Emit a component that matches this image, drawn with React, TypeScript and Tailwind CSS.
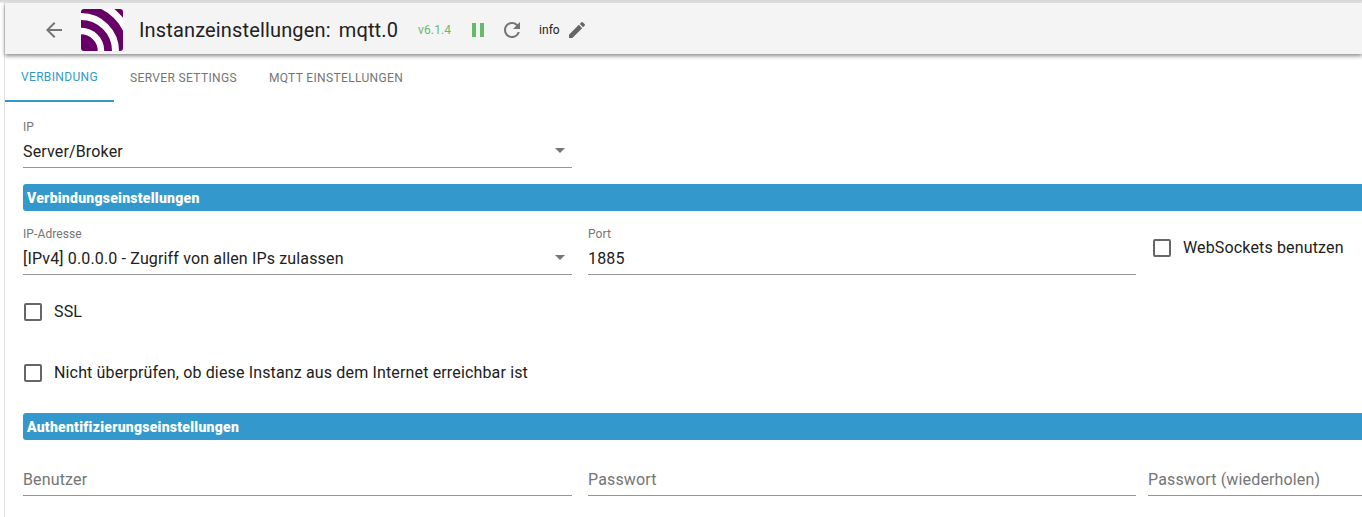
function MqttLogo() {
  return (
    <svg width="42" height="42" viewBox="0 0 42 42" className="rounded-[3px]">
      <rect width="42" height="42" fill="#660066" />
      <circle cx="0" cy="42" r="20" fill="none" stroke="#fff" strokeWidth="6.5" />
      <circle cx="0" cy="42" r="34.5" fill="none" stroke="#fff" strokeWidth="7" />
      <circle cx="0" cy="42" r="50" fill="none" stroke="#fff" strokeWidth="7" />
    </svg>
  );
}

function Caret() {
  return (
    <svg width="24" height="24" viewBox="0 0 24 24" className="absolute right-0 top-[2px] text-[#757575]">
      <path d="M7 10l5 5 5-5z" fill="currentColor" />
    </svg>
  );
}

function SelectField({ label, value, width }: { label: string; value: string; width: string }) {
  return (
    <div className={`${width} shrink-0`}>
      <div className="h-[16px] text-[12px] leading-[16px] tracking-[0.1px] text-[#757575]">{label}</div>
      <div className="relative mt-[1px] h-[32px] border-b border-[#949494] pt-[4px] text-[16px] leading-[24px] tracking-[0.15px] text-[#212121]">
        {value}
        <Caret />
      </div>
    </div>
  );
}

function Checkbox({ label }: { label: string }) {
  return (
    <div className="flex items-center">
      <span className="ml-[1px] h-[18px] w-[18px] shrink-0 rounded-[2px] border-2 border-[#666666]" />
      <span className="ml-[12px] text-[16px] leading-[24px] tracking-[0.15px] text-[#212121]">{label}</span>
    </div>
  );
}

function Section({ title }: { title: string }) {
  return (
    <div className="h-[27px] rounded-l-[3px] bg-[#3399cc] pl-[4px] text-[14px] font-black leading-[29px] tracking-[0.25px] text-white">
      {title}
    </div>
  );
}

function EmptyField({ label, width }: { label: string; width: string }) {
  return (
    <div className={`${width} h-[28px] shrink-0 border-b border-[#949494] text-[16px] leading-[24px] tracking-[0.15px] text-[#757575]`}>
      {label}
    </div>
  );
}

export default function App() {
  return (
    <div className="h-[517px] w-[1362px] overflow-hidden bg-white font-['Roboto',sans-serif]">
      <div className="h-[3px] bg-gradient-to-b from-[#d4d4d4] to-[#ececec]" />
      <div className="ml-[4px] h-[514px] border-l border-[#e2e2e2]">
        {/* Toolbar */}
        <div className="flex h-[51px] items-center bg-[#f4f4f4] pt-[2px] shadow-[0_2px_4px_rgba(0,0,0,0.45)]">
          <svg width="24" height="24" viewBox="0 0 24 24" className="ml-[37px] text-[#757575]">
            <path fill="currentColor" d="M20 11H7.83l5.59-5.59L12 4l-8 8 8 8 1.41-1.41L7.83 13H20v-2z" />
          </svg>
          <div className="ml-[15px] h-[42px]">
            <MqttLogo />
          </div>
          <span className="ml-[16px] text-[20px] tracking-[0.15px] text-[#212121]">Instanzeinstellungen:</span>
          <span className="ml-[8px] text-[20px] tracking-[0.15px] text-[#212121]">mqtt.0</span>
          <span className="ml-[20px] text-[12px] tracking-[0.1px] text-[#66bb6a]">v6.1.4</span>
          <svg width="12" height="14" viewBox="0 0 12 14" className="ml-[21px]">
            <rect x="0" y="0" width="4" height="14" fill="#66bb6a" />
            <rect x="8" y="0" width="4" height="14" fill="#66bb6a" />
          </svg>
          <svg width="24" height="24" viewBox="0 0 24 24" className="ml-[16px] text-[#757575]">
            <path fill="currentColor" d="M17.65 6.35A7.958 7.958 0 0 0 12 4c-4.42 0-7.99 3.58-7.99 8s3.57 8 7.99 8c3.73 0 6.84-2.55 7.73-6h-2.08A5.99 5.99 0 0 1 12 18c-3.31 0-6-2.69-6-6s2.69-6 6-6c1.66 0 3.14.69 4.22 1.78L13 11h7V4l-2.35 2.35z" />
          </svg>
          <span className="ml-[15px] text-[12px] text-[#212121]">info</span>
          <svg width="16" height="16" viewBox="3 3 18 18" className="ml-[9px] text-[#666666]">
            <path fill="currentColor" d="M3 17.25V21h3.75L17.81 9.94l-3.75-3.75L3 17.25zM20.71 7.04a1 1 0 0 0 0-1.41l-2.34-2.34a1 1 0 0 0-1.41 0l-1.83 1.83 3.75 3.75 1.83-1.83z" />
          </svg>
        </div>

        {/* Tabs */}
        <div className="flex h-[48px] text-[12px] font-normal tracking-[0.35px]">
          <div className="flex w-[109px] items-center justify-center border-b-2 border-[#3399cc] text-[#3399cc]">VERBINDUNG</div>
          <div className="flex w-[139px] items-center justify-center text-[#757575]">SERVER SETTINGS</div>
          <div className="flex w-[166px] items-center justify-center text-[#757575]">MQTT EINSTELLUNGEN</div>
        </div>

        {/* Form */}
        <div className="pl-[18px] pt-[17px]">
          <SelectField label="IP" value="Server/Broker" width="w-[549px]" />
          <div className="mt-[16px]">
            <Section title="Verbindungseinstellungen" />
          </div>
          <div className="mt-[15px] flex">
            <SelectField label="IP-Adresse" value="[IPv4] 0.0.0.0 - Zugriff von allen IPs zulassen" width="w-[549px]" />
            <div className="ml-[16px] w-[548px] shrink-0">
              <div className="h-[16px] text-[12px] leading-[16px] tracking-[0.1px] text-[#757575]">Port</div>
              <div className="mt-[1px] h-[32px] border-b border-[#949494] pt-[4px] text-[16px] leading-[24px] tracking-[0.15px] text-[#212121]">1885</div>
            </div>
            <div className="ml-[16px] pt-[10px]">
              <Checkbox label="WebSockets benutzen" />
            </div>
          </div>
          <div className="mt-[25px]">
            <Checkbox label="SSL" />
          </div>
          <div className="mt-[37px]">
            <Checkbox label="Nicht überprüfen, ob diese Instanz aus dem Internet erreichbar ist" />
          </div>
          <div className="mt-[28px]">
            <Section title="Authentifizierungseinstellungen" />
          </div>
          <div className="mt-[28px] flex">
            <EmptyField label="Benutzer" width="w-[549px]" />
            <EmptyField label="Passwort" width="ml-[16px] w-[548px]" />
            <EmptyField label="Passwort (wiederholen)" width="ml-[12px] w-[300px]" />
          </div>
        </div>
      </div>
    </div>
  );
}
